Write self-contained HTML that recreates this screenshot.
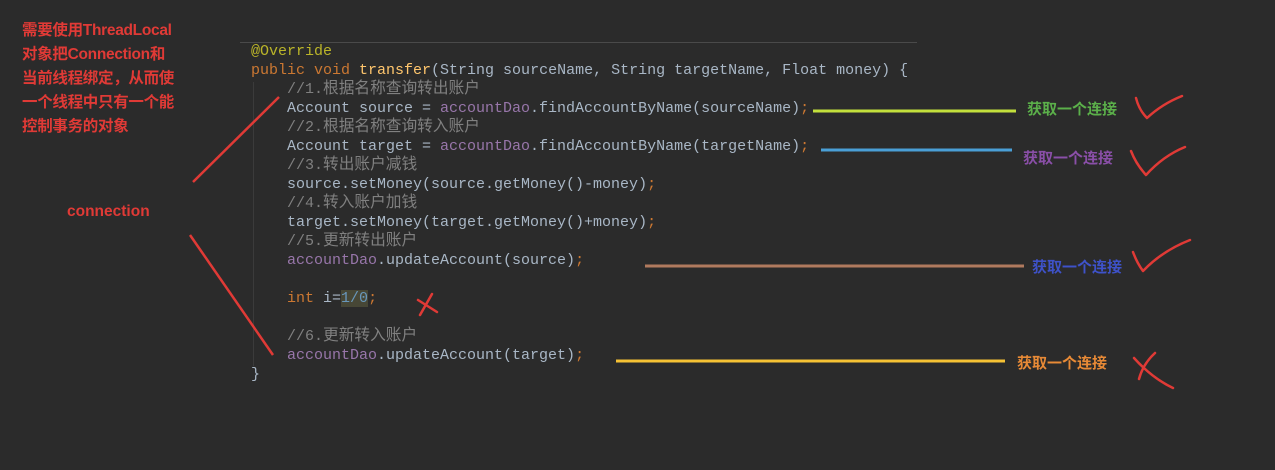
<!DOCTYPE html>
<html><head><meta charset="utf-8"><style>
html,body{margin:0;padding:0;}
body{width:1275px;height:470px;background:#2b2b2b;position:relative;overflow:hidden;font-family:"Liberation Sans","Noto Sans CJK SC",sans-serif;}
.note{position:absolute;left:22px;top:19px;color:#e03a36;font-weight:bold;font-size:15.5px;line-height:24px;letter-spacing:-0.3px;}
.conn{position:absolute;left:67px;top:203px;color:#e03a36;font-weight:bold;font-size:15.5px;}
.code{position:absolute;left:251px;top:42px;font-family:"Liberation Mono","Noto Sans CJK SC",monospace;font-size:15px;line-height:19px;color:#a9b7c6;white-space:pre;}
.k{color:#cc7832}.a{color:#bbb529}.f{color:#ffc66d}.c{color:#808080}.v{color:#9876aa}.n{color:#6897bb}
.cj{font-size:15.7px;}
.lbl{position:absolute;font-weight:bold;font-size:15px;}
svg{position:absolute;left:0;top:0;}
</style></head><body>
<div class="note">需要使用ThreadLocal<br>对象把Connection和<br>当前线程绑定，从而使<br>一个线程中只有一个能<br>控制事务的对象</div>
<div class="conn">connection</div>
<svg width="1275" height="470">
<line x1="240" y1="42.5" x2="917" y2="42.5" stroke="#4a4a4a" stroke-width="1"/>
<line x1="253.5" y1="82" x2="253.5" y2="366" stroke="#3b3b3b" stroke-width="1"/>
<line x1="193" y1="182" x2="279" y2="97" stroke="#e03a36" stroke-width="2.5"/>
<line x1="190" y1="235" x2="273" y2="355" stroke="#e03a36" stroke-width="2.5"/>
<line x1="813" y1="111" x2="1016" y2="111" stroke="#c3e03c" stroke-width="3"/>
<line x1="821" y1="150" x2="1012" y2="150" stroke="#4a9fd6" stroke-width="3"/>
<line x1="645" y1="266" x2="1024" y2="266" stroke="#b07a5e" stroke-width="3"/>
<line x1="616" y1="361" x2="1005" y2="361" stroke="#f6c234" stroke-width="3"/>
<g fill="none" stroke="#e03a36" stroke-width="2.5" stroke-linecap="round" stroke-linejoin="round">
<path d="M1136 98 Q1139 110 1147 118 Q1162 104 1182 96"/>
<path d="M1131 151 Q1136 164 1146 175 Q1163 156 1185 147"/>
<path d="M1133 252 Q1137 263 1143 271 Q1162 251 1190 240"/>
<path d="M1134 358 Q1152 378 1173 388 M1155 353 Q1143 364 1139 379"/>
<path d="M418 300 L437 312 M432 294 L420 315"/>
</g>
</svg>
<div class="lbl" style="left:1027px;top:98px;color:#5bb04a">获取一个连接</div>
<div class="lbl" style="left:1023px;top:147px;color:#8a4fa8">获取一个连接</div>
<div class="lbl" style="left:1032px;top:256px;color:#3e52c9">获取一个连接</div>
<div class="lbl" style="left:1017px;top:352px;color:#e88a36">获取一个连接</div>
<div class="code"><span class="a">@Override</span>
<span class="k">public void </span><span class="f">transfer</span>(String sourceName, String targetName, Float money) {
    <span class="c">//1.<span class="cj">根据名称查询转出账户</span></span>
    Account source = <span class="v">accountDao</span>.findAccountByName(sourceName)<span class="k">;</span>
    <span class="c">//2.<span class="cj">根据名称查询转入账户</span></span>
    Account target = <span class="v">accountDao</span>.findAccountByName(targetName)<span class="k">;</span>
    <span class="c">//3.<span class="cj">转出账户减钱</span></span>
    source.setMoney(source.getMoney()-money)<span class="k">;</span>
    <span class="c">//4.<span class="cj">转入账户加钱</span></span>
    target.setMoney(target.getMoney()+money)<span class="k">;</span>
    <span class="c">//5.<span class="cj">更新转出账户</span></span>
    <span class="v">accountDao</span>.updateAccount(source)<span class="k">;</span>

    <span class="k">int </span>i=<span class="n" style="background:#474736">1/0</span><span class="k">;</span>

    <span class="c">//6.<span class="cj">更新转入账户</span></span>
    <span class="v">accountDao</span>.updateAccount(target)<span class="k">;</span>
}</div>
</body></html>
